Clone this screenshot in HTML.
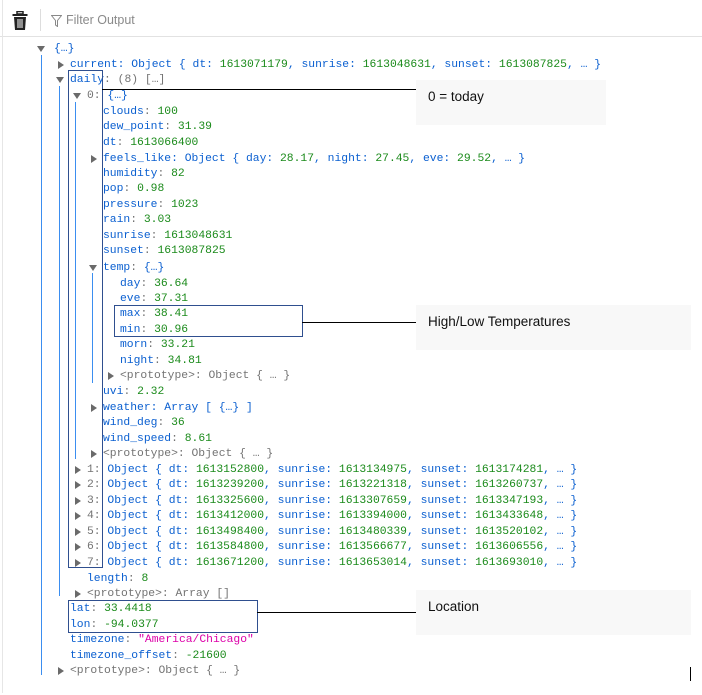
<!DOCTYPE html>
<html><head><meta charset="utf-8"><style>
*{margin:0;padding:0;box-sizing:border-box}
body{width:702px;height:693px;background:#fff;position:relative;overflow:hidden;font-family:"Liberation Mono",monospace;font-size:11.35px}
#w{position:absolute;left:0;top:2px;width:702px;height:693px}
.l{position:absolute;height:16px;line-height:16px;white-space:pre;color:#0a5fd0}
.n{color:#1a8a1a}.s{color:#dd00a9}.g{color:#737373}.k{color:#0a5fd0}
.a{position:absolute;width:0;height:0;border-style:solid}
.ad{border-width:6px 4px 0 4px;border-color:#6a6a6a transparent transparent transparent}
.ar{border-width:4px 0 4px 6px;border-color:transparent transparent transparent #6a6a6a}
.v{position:absolute;width:1px;background:#3b8ef0}
.box{position:absolute;border:1px solid #2f4f8f}
.note{position:absolute;background:#f8f8f8;font-family:"Liberation Sans",sans-serif;font-size:13.5px;color:#111;padding:9px 0 0 12px}
.h{position:absolute;height:1px;background:#000}
</style></head><body>
<div style="position:absolute;left:0;top:0;width:702px;height:37px;border-bottom:1px solid #e2e2e2"></div>
<div style="position:absolute;left:2px;top:0;width:1px;height:693px;background:#e6e6e6"></div>
<svg style="position:absolute;left:12px;top:11px" width="16" height="20" viewBox="0 0 16 20"><rect x="5" y="0.5" width="6" height="2.5" fill="none" stroke="#222" stroke-width="1.5"/><rect x="0.5" y="3" width="15" height="2" fill="#222"/><path d="M2 6h12l-1 13H3z" fill="#222"/><path d="M6 8v9M8 8v9M10 8v9" stroke="#fff" stroke-width="1"/></svg>
<div style="position:absolute;left:40px;top:9px;width:1px;height:22px;background:#ddd"></div>
<svg style="position:absolute;left:51px;top:15px" width="11" height="12" viewBox="0 0 11 12"><path d="M0.5 0.5h10L6.5 5.5v6l-2-1.5V5.5z" fill="none" stroke="#888" stroke-width="1"/></svg>
<div style="position:absolute;left:66px;top:13px;font-family:'Liberation Sans',sans-serif;font-size:12.5px;color:#8a8a8a">Filter Output</div>

<div id="w">
<div class="v" style="left:41px;top:53px;height:620px"></div>
<div class="v" style="left:59px;top:84px;height:510px"></div>
<div class="v" style="left:75px;top:100px;height:357px"></div>
<div class="v" style="left:92px;top:271px;height:110px"></div>

<div class="a ad" style="left:37px;top:44px"></div>
<div class="l" style="left:54px;top:39px">{…}</div>
<div class="a ar" style="left:58px;top:59px"></div>
<div class="l" style="left:70px;top:55px">current: Object { dt: <span class="n">1613071179</span>, sunrise: <span class="n">1613048631</span>, sunset: <span class="n">1613087825</span>, … }</div>
<div class="a ad" style="left:56px;top:75px"></div>
<div class="l" style="left:70px;top:70px">daily<span class="g">: (8) […]</span></div>
<div class="a ad" style="left:73px;top:91px"></div>
<div class="l" style="left:87px;top:86px"><span class="g">0:</span> {…}</div>
<div class="l" style="left:103px;top:102px">clouds<span class="g">: </span><span class="n">100</span></div>
<div class="l" style="left:103px;top:117px">dew_point<span class="g">: </span><span class="n">31.39</span></div>
<div class="l" style="left:103px;top:133px">dt<span class="g">: </span><span class="n">1613066400</span></div>
<div class="a ar" style="left:91px;top:153px"></div>
<div class="l" style="left:103px;top:149px">feels_like: Object { day: <span class="n">28.17</span>, night: <span class="n">27.45</span>, eve: <span class="n">29.52</span>, … }</div>
<div class="l" style="left:103px;top:164px">humidity<span class="g">: </span><span class="n">82</span></div>
<div class="l" style="left:103px;top:179px">pop<span class="g">: </span><span class="n">0.98</span></div>
<div class="l" style="left:103px;top:195px">pressure<span class="g">: </span><span class="n">1023</span></div>
<div class="l" style="left:103px;top:210px">rain<span class="g">: </span><span class="n">3.03</span></div>
<div class="l" style="left:103px;top:226px">sunrise<span class="g">: </span><span class="n">1613048631</span></div>
<div class="l" style="left:103px;top:241px">sunset<span class="g">: </span><span class="n">1613087825</span></div>
<div class="a ad" style="left:89px;top:263px"></div>
<div class="l" style="left:103px;top:258px">temp<span class="g">: </span>{…}</div>
<div class="l" style="left:120px;top:274px">day<span class="g">: </span><span class="n">36.64</span></div>
<div class="l" style="left:120px;top:289px">eve<span class="g">: </span><span class="n">37.31</span></div>
<div class="l" style="left:120px;top:304px">max<span class="g">: </span><span class="n">38.41</span></div>
<div class="l" style="left:120px;top:320px">min<span class="g">: </span><span class="n">30.96</span></div>
<div class="l" style="left:120px;top:335px">morn<span class="g">: </span><span class="n">33.21</span></div>
<div class="l" style="left:120px;top:351px">night<span class="g">: </span><span class="n">34.81</span></div>
<div class="a ar" style="left:108px;top:370px"></div>
<div class="l g" style="left:120px;top:366px">&lt;prototype&gt;: Object { … }</div>
<div class="l" style="left:103px;top:382px">uvi<span class="g">: </span><span class="n">2.32</span></div>
<div class="a ar" style="left:91px;top:402px"></div>
<div class="l" style="left:103px;top:398px">weather: Array [ {…} ]</div>
<div class="l" style="left:103px;top:413px">wind_deg<span class="g">: </span><span class="n">36</span></div>
<div class="l" style="left:103px;top:429px">wind_speed<span class="g">: </span><span class="n">8.61</span></div>
<div class="a ar" style="left:91px;top:448px"></div>
<div class="l g" style="left:103px;top:444px">&lt;prototype&gt;: Object { … }</div>

<div class="a ar" style="left:75px;top:464px"></div>
<div class="l" style="left:87px;top:460px"><span class="g">1:</span> Object { dt: <span class="n">1613152800</span>, sunrise: <span class="n">1613134975</span>, sunset: <span class="n">1613174281</span>, … }</div>
<div class="a ar" style="left:75px;top:479px"></div>
<div class="l" style="left:87px;top:475px"><span class="g">2:</span> Object { dt: <span class="n">1613239200</span>, sunrise: <span class="n">1613221318</span>, sunset: <span class="n">1613260737</span>, … }</div>
<div class="a ar" style="left:75px;top:495px"></div>
<div class="l" style="left:87px;top:491px"><span class="g">3:</span> Object { dt: <span class="n">1613325600</span>, sunrise: <span class="n">1613307659</span>, sunset: <span class="n">1613347193</span>, … }</div>
<div class="a ar" style="left:75px;top:510px"></div>
<div class="l" style="left:87px;top:506px"><span class="g">4:</span> Object { dt: <span class="n">1613412000</span>, sunrise: <span class="n">1613394000</span>, sunset: <span class="n">1613433648</span>, … }</div>
<div class="a ar" style="left:75px;top:526px"></div>
<div class="l" style="left:87px;top:522px"><span class="g">5:</span> Object { dt: <span class="n">1613498400</span>, sunrise: <span class="n">1613480339</span>, sunset: <span class="n">1613520102</span>, … }</div>
<div class="a ar" style="left:75px;top:541px"></div>
<div class="l" style="left:87px;top:537px"><span class="g">6:</span> Object { dt: <span class="n">1613584800</span>, sunrise: <span class="n">1613566677</span>, sunset: <span class="n">1613606556</span>, … }</div>
<div class="a ar" style="left:75px;top:557px"></div>
<div class="l" style="left:87px;top:553px"><span class="g">7:</span> Object { dt: <span class="n">1613671200</span>, sunrise: <span class="n">1613653014</span>, sunset: <span class="n">1613693010</span>, … }</div>
<div class="l" style="left:87px;top:569px">length<span class="g">: </span><span class="n">8</span></div>
<div class="a ar" style="left:75px;top:588px"></div>
<div class="l g" style="left:87px;top:584px">&lt;prototype&gt;: Array []</div>
<div class="l" style="left:70px;top:599px">lat<span class="g">: </span><span class="n">33.4418</span></div>
<div class="l" style="left:70px;top:615px">lon<span class="g">: </span><span class="n">-94.0377</span></div>
<div class="l" style="left:70px;top:630px">timezone<span class="g">: </span><span class="s">"America/Chicago"</span></div>
<div class="l" style="left:70px;top:646px">timezone_offset<span class="g">: </span><span class="n">-21600</span></div>
<div class="a ar" style="left:58px;top:665px"></div>
<div class="l g" style="left:70px;top:661px">&lt;prototype&gt;: Object { … }</div>
</div>

<div class="box" style="left:68px;top:70px;width:35px;height:498px"></div>
<div class="box" style="left:114px;top:305px;width:189px;height:32px"></div>
<div class="box" style="left:68px;top:600px;width:190px;height:33px"></div>

<div class="h" style="left:102px;top:89px;width:314px"></div>
<div class="h" style="left:302px;top:322px;width:114px"></div>
<div class="h" style="left:257px;top:612px;width:159px"></div>
<div class="note" style="left:416px;top:80px;width:190px;height:45px">0 = today</div>
<div class="note" style="left:416px;top:305px;width:275px;height:45px">High/Low Temperatures</div>
<div class="note" style="left:416px;top:590px;width:275px;height:45px">Location</div>
<div style="position:absolute;left:690px;top:667px;width:1px;height:14px;background:#000"></div>
</body></html>
